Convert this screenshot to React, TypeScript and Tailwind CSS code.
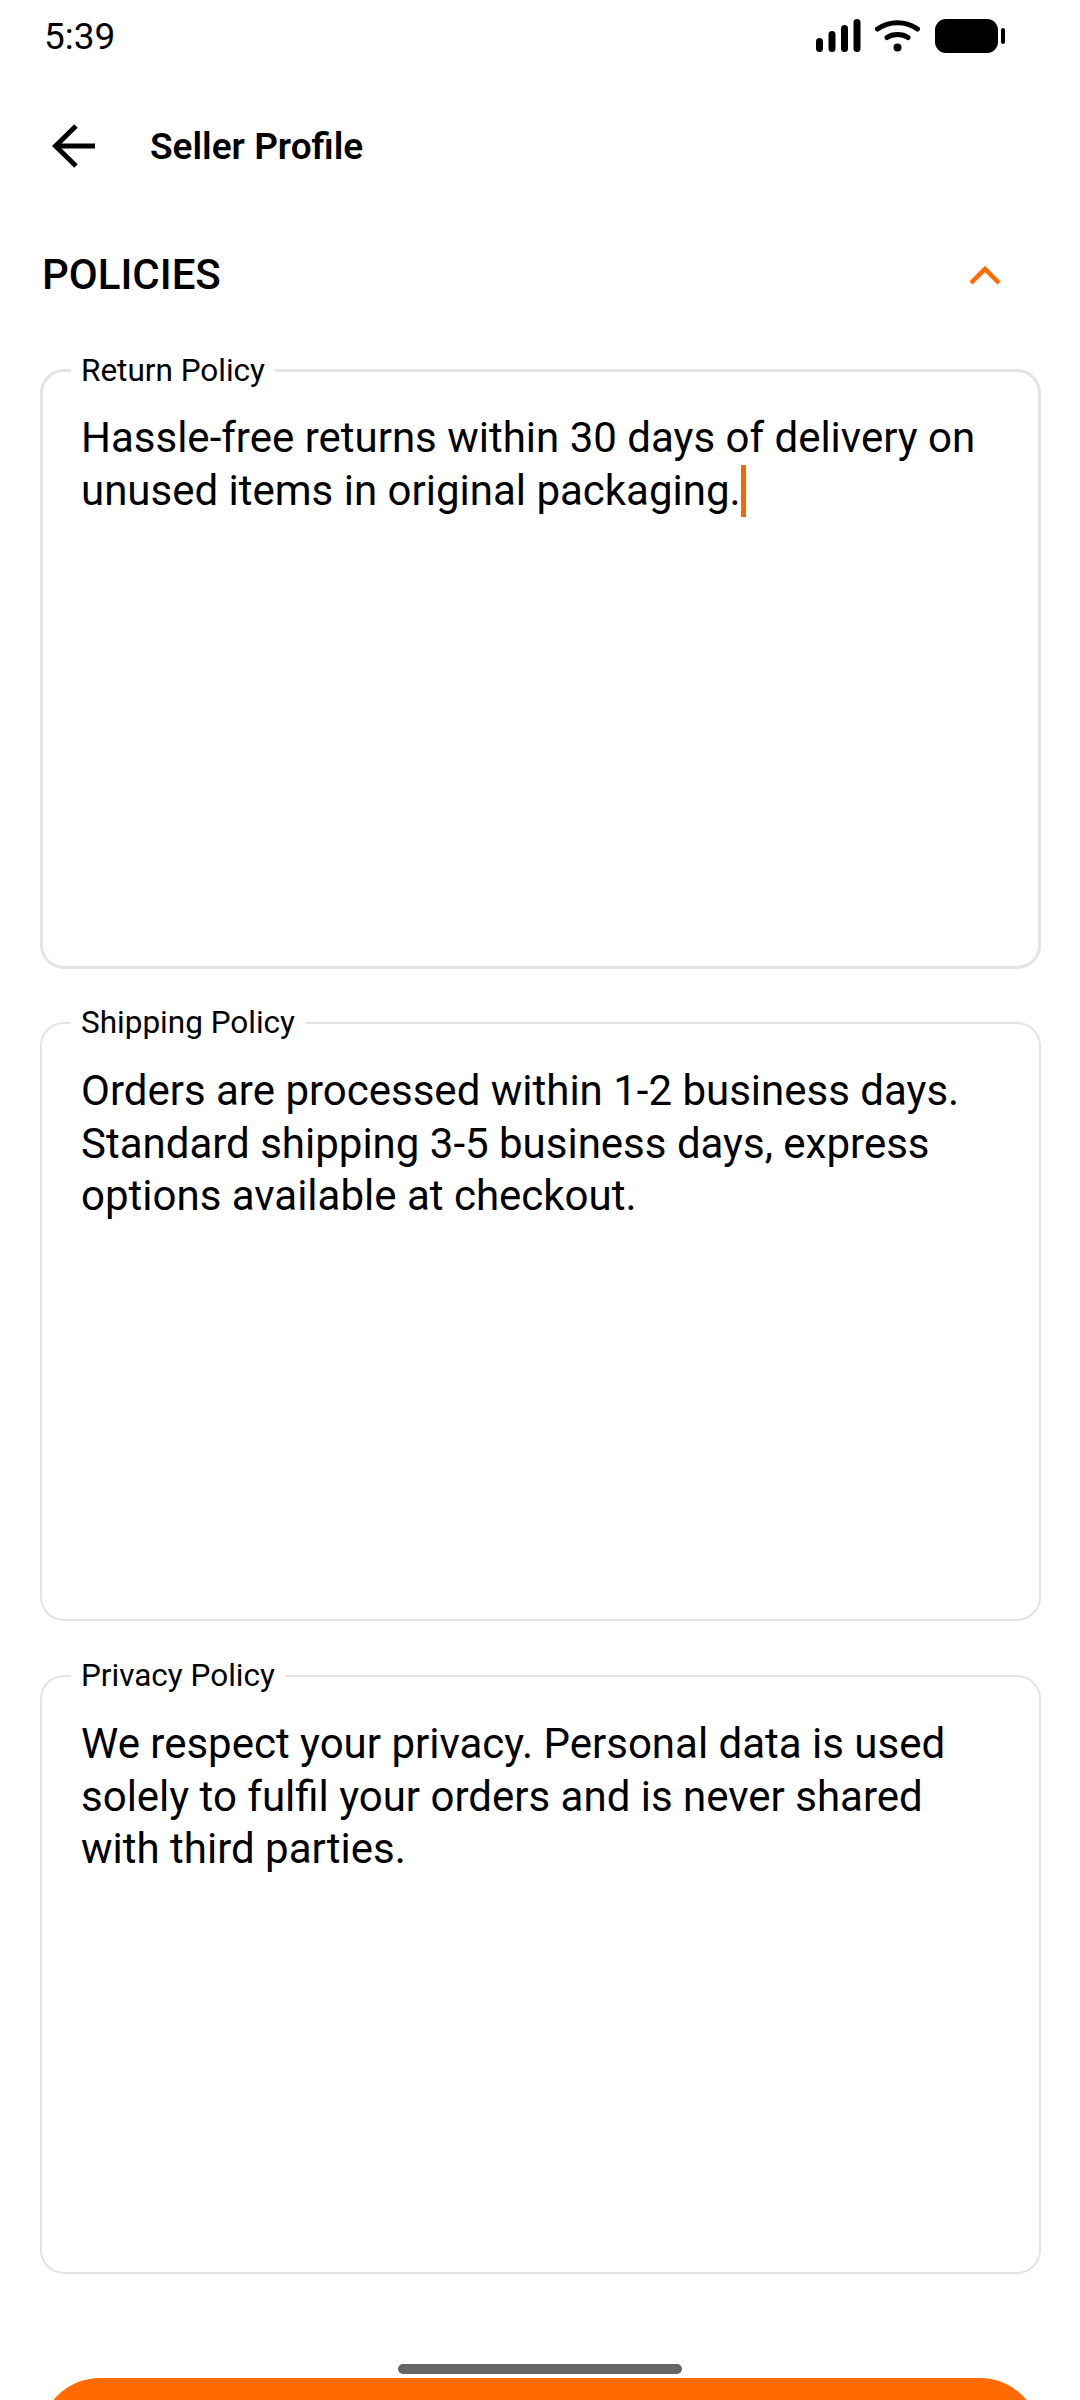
const policies = [
    {
        label: 'Return Policy',
        lines: ['Hassle-free returns within 30 days of delivery on', 'unused items in original packaging.'],
        focused: true,
    },
    {
        label: 'Shipping Policy',
        lines: ['Orders are processed within 1-2 business days.', 'Standard shipping 3-5 business days, express', 'options available at checkout.'],
        focused: false,
    },
    {
        label: 'Privacy Policy',
        lines: ['We respect your privacy. Personal data is used', 'solely to fulfil your orders and is never shared', 'with third parties.'],
        focused: false,
    },
];

const StatusIcons = () => (
    <div className="flex items-center">
        <svg width="46" height="34" viewBox="0 0 46 34" fill="#000">
            <rect x="1" y="19" width="7" height="14" rx="3.5" />
            <rect x="13.5" y="12" width="7" height="21" rx="3.5" />
            <rect x="26" y="6" width="7" height="27" rx="3.5" />
            <rect x="38.5" y="0" width="7" height="33" rx="3.5" />
        </svg>
        <svg className="ml-[14px]" width="45" height="34" viewBox="0 0 45 34" fill="none" stroke="#000" strokeWidth="5" strokeLinecap="round">
            <path d="M2.5 10C14 1.5 31 1.5 42.5 10" />
            <path d="M12 18.5C17.5 14.5 27.5 14.5 33 18.5" />
            <circle cx="22.5" cy="28.5" r="4" fill="#000" stroke="none" />
        </svg>
        <svg className="ml-[15px]" width="71" height="34" viewBox="0 0 71 34" fill="#000">
            <rect x="0" y="0" width="63" height="34" rx="11" />
            <rect x="66" y="9" width="4" height="16" rx="2" />
        </svg>
    </div>
);

const PolicyField = ({ label, lines, focused }: { label: string; lines: string[]; focused: boolean }) => (
    <div className={`relative rounded-[24px] border-[#e4e4e4] bg-white ${focused ? 'mb-[-1px] h-[600px] border-[3px] pl-[38px] pt-[40px]' : 'h-[599px] border-2 pl-[39px] pt-[41px]'}`}>
        <span className={`absolute top-[-19px] bg-white px-[10px] text-[31.5px] leading-[36px] text-black ${focused ? 'left-[28px]' : 'left-[29px]'}`}>{label}</span>
        <div className="text-[42px] leading-[52.5px] text-black">
            {lines.map((line, i) => (
                <p key={line} className="whitespace-nowrap">
                    {line}
                    {focused && i === lines.length - 1 && <span className="inline-block h-[52px] w-[5px] bg-[#f06a00] align-top" />}
                </p>
            ))}
        </div>
    </div>
);

export default function App() {
    return (
        <div className="relative h-[2400px] w-[1080px] overflow-hidden bg-white font-['Roboto',sans-serif]">
            <div className="flex h-[72px] items-center justify-between pl-[44px] pr-[74px]">
                <span className="text-[37px] leading-none text-black">5:39</span>
                <StatusIcons />
            </div>

            <div className="mt-[40px] flex h-[68px] items-center pl-[52px]">
                <svg width="43" height="44" viewBox="0 0 43 44" fill="none" stroke="#000" strokeWidth="5">
                    <path d="M43 22H4" />
                    <path d="M24 2L3.5 22L24 42" />
                </svg>
                <span className="ml-[55px] text-[37px] font-semibold leading-none text-black">Seller Profile</span>
            </div>

            <div className="mt-[69px] flex h-[52px] items-center justify-between pl-[42px] pr-[79px]">
                <span className="text-[42px] font-medium leading-none text-black">POLICIES</span>
                <svg className="mb-[2px]" width="32" height="22" viewBox="0 0 32 22" fill="none" stroke="#ff6b00" strokeWidth="4.5">
                    <path d="M2 20L16 6L30 20" />
                </svg>
            </div>

            <div className="mt-[68px] flex flex-col gap-[54px] pl-[40px] pr-[39px]">
                {policies.map(policy => (
                    <PolicyField key={policy.label} {...policy} />
                ))}
            </div>

            <div className="mx-[40px] mt-[104px] h-[120px] rounded-[60px] bg-[#ff6b00]" />

            <div className="absolute left-[398px] top-[2364px] h-[10px] w-[284px] rounded-full bg-[#666666]" />
        </div>
    );
}
